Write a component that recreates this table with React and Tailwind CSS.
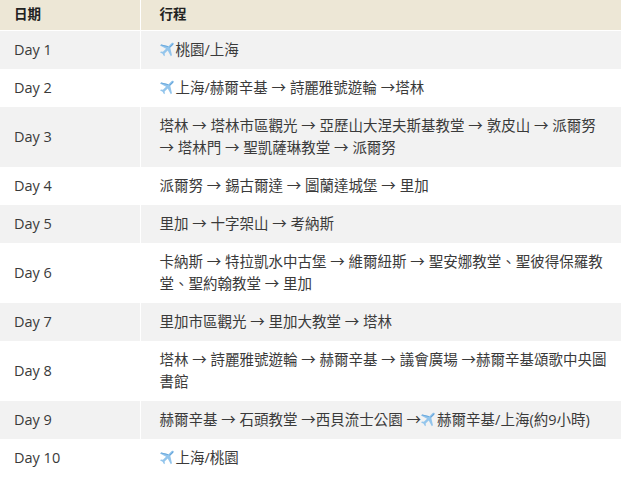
import React from "react";

const Plane = () => (
  <svg viewBox="2 2 20 20" className="inline-block w-[16px] h-[16px] align-[-2px]">
    <g transform="rotate(45 12 12)">
      <path
        d="M21 16v-2l-8-5V3.5c0-.83-.67-1.5-1.5-1.5S10 2.67 10 3.5V9l-8 5v2l8-2.5V19l-2 1.5V22l3.5-1 3.5 1v-1.5L13 19v-5.5l8 2.5z"
        fill="#93c5ec"
      />
      <path d="M11.5 2.5c.6 0 1 .5 1 1.2V9l-1 .5z" fill="#5f9fd6" />
      <path d="M2 14l8-5v1.5L2 15.5z" fill="#6aa8dc" />
    </g>
  </svg>
);

const A = () => <span> → </span>;

const rows = [
  ["Day 1", <><Plane />桃園/上海</>],
  ["Day 2", <><Plane />上海/赫爾辛基<A />詩麗雅號遊輪 →塔林</>],
  ["Day 3", <>塔林<A />塔林市區觀光<A />亞歷山大涅夫斯基教堂<A />敦皮山<A />派爾努<br />→ 塔林門<A />聖凱薩琳教堂<A />派爾努</>],
  ["Day 4", <>派爾努<A />錫古爾達<A />圖蘭達城堡<A />里加</>],
  ["Day 5", <>里加<A />十字架山<A />考納斯</>],
  ["Day 6", <>卡納斯<A />特拉凱水中古堡<A />維爾紐斯<A />聖安娜教堂、聖彼得保羅教<br />堂、聖約翰教堂<A />里加</>],
  ["Day 7", <>里加市區觀光<A />里加大教堂<A />塔林</>],
  ["Day 8", <>塔林<A />詩麗雅號遊輪<A />赫爾辛基<A />議會廣場 →赫爾辛基頌歌中央圖<br />書館</>],
  ["Day 9", <>赫爾辛基<A />石頭教堂 →西貝流士公園 →<Plane />赫爾辛基/上海(約9小時)</>],
  ["Day 10", <><Plane />上海/桃園</>],
];

export default function App() {
  return (
    <div className="w-[621px] h-[490px] bg-white text-[#3a3a3a] overflow-hidden" style={{ fontFamily: '"Open Sans", "Noto Sans CJK TC", sans-serif' }}>
      <table className="w-full border-collapse text-[14.5px]">
        <thead>
          <tr className="bg-[#ede7d6] h-[30px]">
            <th className="w-[140px] text-left font-semibold text-[13.5px] text-[#222] pl-[14px] border-r border-b border-white leading-[29px] p-0">日期</th>
            <th className="text-left font-semibold text-[13.5px] text-[#222] pl-[19px] border-b border-white leading-[29px] p-0">行程</th>
          </tr>
        </thead>
        <tbody>
          {rows.map(([d, c], i) => (
            <tr key={d} className={i % 2 === 0 ? "bg-[#f2f2f2]" : "bg-white"}>
              <td className="w-[140px] pl-[14px] py-[8px] leading-[22px] border-r border-white align-middle whitespace-nowrap">{d}</td>
              <td className="pl-[19px] pr-[10px] py-[8px] leading-[22px] align-middle whitespace-nowrap">{c}</td>
            </tr>
          ))}
        </tbody>
      </table>
    </div>
  );
}
